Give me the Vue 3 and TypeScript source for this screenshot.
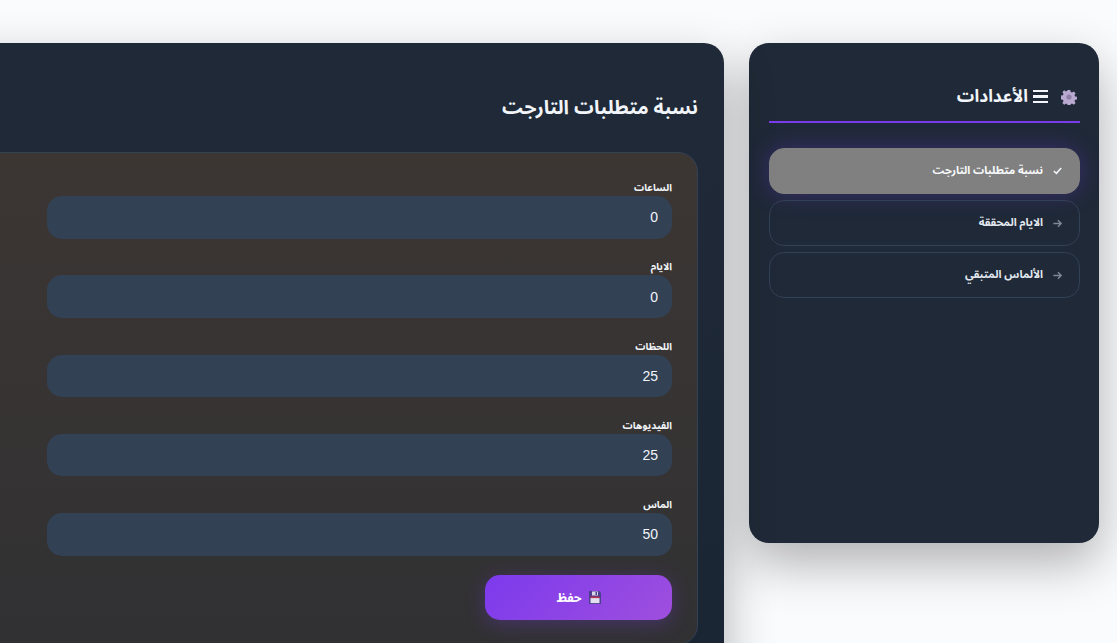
<script setup lang="ts">
const menu = [
  { label: 'نسبة متطلبات التارجت', active: true },
  { label: 'الايام المحققة', active: false },
  { label: 'الألماس المتبقي', active: false },
]
const fields = [
  { label: 'الساعات', value: '0' },
  { label: 'الايام', value: '0' },
  { label: 'اللحظات', value: '25' },
  { label: 'الفيديوهات', value: '25' },
  { label: 'الماس', value: '50' },
]
</script>

<template>
  <div class="page" dir="rtl">
    <aside class="side">
      <h2 class="side-title">
        <svg class="gear" viewBox="0 0 16 16" aria-hidden="true">
          <path fill="#b9a9d0" fill-rule="evenodd" d="M6.7 1h2.6l.4 2 1.3.6 1.8-1.1 1.8 1.8-1.1 1.8.6 1.3 2 .4v2.6l-2 .4-.6 1.3 1.1 1.8-1.8 1.8-1.8-1.1-1.3.6-.4 2H6.7l-.4-2-1.3-.6-1.8 1.1-1.8-1.8 1.1-1.8-.6-1.3-2-.4V6.6l2-.4.6-1.3-1.1-1.8 1.8-1.8L4.9 2.4l1.3-.6z"/>
          <circle cx="8" cy="8" r="2.6" fill="#8f7fa8"/>
        </svg>
        <span class="burger"><i></i><i></i><i></i></span>
        <span>الأعدادات</span>
      </h2>
      <nav class="menu">
        <a v-for="item in menu" :key="item.label" class="menu-item" :class="{ active: item.active }">
          <svg v-if="item.active" class="mark" viewBox="0 0 12 12" aria-hidden="true">
            <path d="M2 5.5 4.8 8 10 2.2" fill="none" stroke="#f1f5f9" stroke-width="1.7"/>
          </svg>
          <svg v-else class="mark" viewBox="0 0 12 12" aria-hidden="true">
            <path d="M1.5 6h8.5M6.5 2.5 10 6l-3.5 3.5" fill="none" stroke="#7f8794" stroke-width="1.6"/>
          </svg>
          <span class="menu-text">{{ item.label }}</span>
        </a>
      </nav>
    </aside>

    <main class="panel">
      <h1 class="panel-title">نسبة متطلبات التارجت</h1>
      <form class="card" @submit.prevent>
        <div v-for="f in fields" :key="f.label" class="field">
          <label class="field-label">{{ f.label }}</label>
          <input class="field-input" :value="f.value" readonly />
        </div>
        <button class="save" type="button">
          <svg class="disk" viewBox="0 0 12 13" aria-hidden="true">
            <path fill="#4a3f8f" d="M0 0h10l2 2v11H0z"/>
            <rect x="3" y="0.5" width="6" height="4" fill="#d9d6e8"/>
            <rect x="6.5" y="1" width="1.5" height="3" fill="#4a3f8f"/>
            <rect x="1.5" y="5.5" width="9" height="1.6" fill="#b8324f"/>
            <rect x="1.5" y="7.1" width="9" height="5" fill="#e4dfee"/>
          </svg>
          <span>حفظ</span>
        </button>
      </form>
    </main>
  </div>
</template>

<style>
html, body { margin: 0; background: #fafbfd; }
</style>

<style scoped>
.page {
  width: 1117px;
  height: 643px;
  box-sizing: border-box;
  overflow: hidden;
  display: flex;
  align-items: flex-start;
  gap: 25px;
  padding: 43px 18px 0 0;
  background: #fafbfd;
  font-family: "Noto Sans Arabic", "Noto Sans", sans-serif;
}
.side {
  flex: 0 0 350px;
  height: 500px;
  box-sizing: border-box;
  padding: 0 19px 0 20px;
  background: #1f2937;
  border-radius: 20px;
  box-shadow: 0 20px 50px rgba(0, 0, 0, 0.3);
}
.side-title {
  margin: 0 0 25px;
  height: 80px;
  box-sizing: border-box;
  padding: 29px 0 0 0;
  display: flex;
  align-items: center;
  color: #f1f5f9;
  font-size: 17.3px;
  font-weight: 700;
  border-bottom: 2px solid #7c3aed;
}
.side-title > * { flex: none; }
.gear { width: 16px; height: 16px; margin: 0 3px 0 13px; }
.burger { display: flex; flex-direction: column; gap: 3px; width: 15px; margin-left: 5px; }
.burger i { display: block; height: 2.5px; background: #f1f5f9; }
.menu { display: flex; flex-direction: column; gap: 6px; }
.menu-item {
  height: 46px;
  box-sizing: border-box;
  display: flex;
  align-items: center;
  gap: 9px;
  padding: 0 16px;
  color: #e2e8f0;
  font-size: 11px;
  font-weight: 700;
  border: 1px solid #334155;
  border-radius: 15px;
}
.menu-text { margin-top: -2px; }
.menu-item.active {
  background: #808080;
  border-color: #808080;
  color: #f8fafc;
  box-shadow: 0 0 25px rgba(124, 58, 237, 0.3);
}
.mark { width: 11px; height: 11px; flex: none; }
.panel {
  flex: 0 0 800px;
  height: 660px;
  box-sizing: border-box;
  padding: 0 26px 0 0;
  background: linear-gradient(160deg, #1f2937 0%, #1f2937 40%, #1a2533 100%);
  border-radius: 20px;
  box-shadow: 0 20px 50px rgba(0, 0, 0, 0.3);
}
.panel-title {
  margin: 0;
  height: 109px;
  box-sizing: border-box;
  padding-top: 48px;
  color: #f1f5f9;
  font-size: 19.5px;
  line-height: 34px;
  font-weight: 700;
}
.card {
  height: 493px;
  box-sizing: border-box;
  padding: 28px 25px 0 0;
  margin-left: -1px;
  background: linear-gradient(180deg, #3c3633 0%, #313133 100%);
  border: 1px solid #334155;
  border-radius: 20px;
}
.field { margin-bottom: 21.75px; width: 625px; }
.field-label {
  display: block;
  height: 15px;
  line-height: 13px;
  color: #f1f5f9;
  font-size: 10px;
  font-weight: 700;
}
.field-input {
  display: block;
  width: 100%;
  height: 42.5px;
  box-sizing: border-box;
  padding: 0 14px;
  border: 0;
  outline: 0;
  border-radius: 15px;
  background: #334155;
  color: #f1f5f9;
  font-family: "Liberation Sans", sans-serif;
  font-size: 14px;
}
.save {
  display: flex;
  align-items: center;
  justify-content: center;
  gap: 7px;
  width: 187px;
  height: 45px;
  margin-top: -2px;
  border: 0;
  border-radius: 15px;
  background: linear-gradient(135deg, #7c3aed, #9f4fdd);
  color: #fff;
  font-family: inherit;
  font-size: 12.5px;
  font-weight: 700;
  box-shadow: 0 4px 20px rgba(124, 58, 237, 0.3);
}
.disk { width: 12px; height: 13px; flex: none; }
</style>
